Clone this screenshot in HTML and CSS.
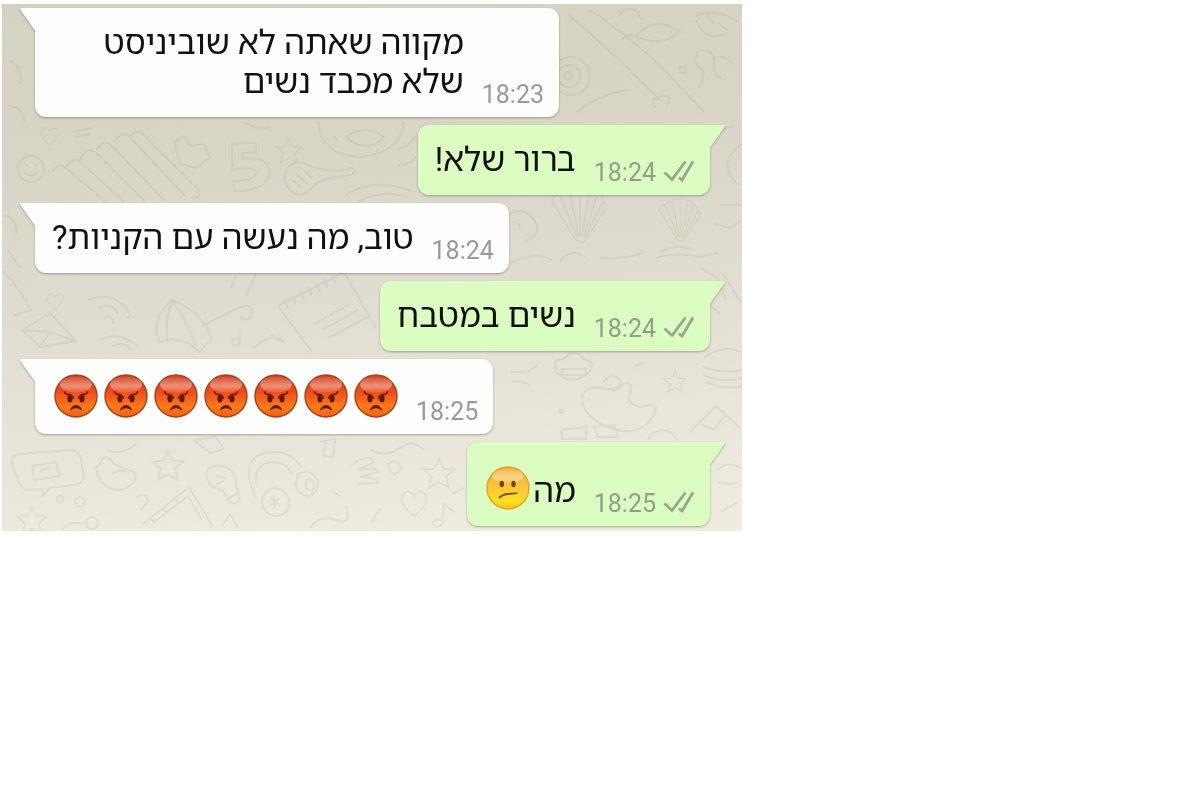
FILE: index.html
```html
<!DOCTYPE html>
<html lang="he">
<head>
    <meta charset="UTF-8">
    <title>Chat</title>
    <link rel="stylesheet" href="styles.css">
</head>
<body>
    <!-- shared icons -->
    <svg class="sprite" aria-hidden="true">
        <defs>
            <linearGradient id="red-face" x1="0" y1="0" x2="0" y2="1">
                <stop offset="0" stop-color="#c93a1c"/>
                <stop offset="0.4" stop-color="#ee4c1c"/>
                <stop offset="0.75" stop-color="#fb7a18"/>
                <stop offset="1" stop-color="#ee6210"/>
            </linearGradient>
            <linearGradient id="yellow-face" x1="0" y1="0" x2="0" y2="1">
                <stop offset="0" stop-color="#f4ab3a"/>
                <stop offset="0.45" stop-color="#fac23a"/>
                <stop offset="0.8" stop-color="#ffdf1f"/>
                <stop offset="1" stop-color="#fbc41c"/>
            </linearGradient>
            <linearGradient id="shine" x1="0" y1="0" x2="0" y2="1">
                <stop offset="0" stop-color="#fff" stop-opacity="0.1"/>
                <stop offset="0.6" stop-color="#fff" stop-opacity="0.4"/>
                <stop offset="1" stop-color="#fff" stop-opacity="0.1"/>
            </linearGradient>
            <symbol id="angry" viewBox="0 0 44 44">
                <circle cx="22" cy="22" r="21" fill="url(#red-face)" stroke="#a8401a" stroke-width="1.4"/>
                <ellipse cx="22" cy="10.5" rx="16" ry="8" fill="url(#shine)"/>
                <ellipse cx="16" cy="24.5" rx="2.6" ry="4" fill="#5c1c08"/>
                <ellipse cx="28" cy="24.5" rx="2.6" ry="4" fill="#5c1c08"/>
                <path d="M10.5 18q1 2.500 4 2.500t5 3.500M33.500 18q-1 2.500-4 2.500t-5 3.500" fill="none" stroke="#7a2009" stroke-width="1.900" stroke-linecap="round"/>
                <path d="M16.500 36q1.500-4.500 5.500-4.500t5.500 4.500q-2.500-2.300-5.500-2.300t-5.500 2.300z" fill="#5c1c08" stroke="#5c1c08" stroke-linejoin="round"/>
            </symbol>
            <symbol id="confused" viewBox="0 0 44 44">
                <circle cx="22" cy="22" r="21" fill="url(#yellow-face)" stroke="#dfa02c" stroke-width="1.4"/>
                <ellipse cx="22" cy="10" rx="15.500" ry="7.500" fill="url(#shine)"/>
                <ellipse cx="15.800" cy="18" rx="2.200" ry="3.200" fill="#6b4a10"/>
                <ellipse cx="27.500" cy="18" rx="2.200" ry="3.200" fill="#6b4a10"/>
                <path d="M13.500 31.500q4-3.500 8.500-3.500t8.500-.8" fill="none" stroke="#7a5210" stroke-width="1.800" stroke-linecap="round"/>
            </symbol>
            <symbol id="ticks" viewBox="0 0 32 24">
                <path d="M1.500 13.500l7.500 7L22.500 2.500M16 18.500l3 2.500L30 2.500" fill="none" stroke="#96a68c" stroke-width="2.800"/>
            </symbol>
            <symbol id="star" viewBox="0 0 40 40">
                <path d="M20 3l5 11 12 1-9 8 3 12-11-6-11 6 3-12-9-8 12-1z"/>
            </symbol>
            <symbol id="heart" viewBox="0 0 40 40">
                <path d="M20 35C9 27 2 18 7 10c5-7 12-2 13 3 2-6 10-9 14-2 3 8-5 17-14 24z"/>
            </symbol>
            <symbol id="shell" viewBox="0 0 80 80">
                <path d="M32 72L4 26q2-10 9-7 2-10 10-6 4-9 12-4 7-6 12 2 9-2 10 6 9 0 9 9 6 6 0 12L44 74q-7 4-12-2zM34 69L14 20M36 69L25 14M38 69l-1-58M40 69l9-56M42 69l16-49M43 70l22-42"/>
            </symbol>
        </defs>
    </svg>

    <main class="chat">
        <svg class="wallpaper" viewBox="2 4 740 527" preserveAspectRatio="xMidYMid slice" aria-hidden="true">
            <!-- left column -->
            <use href="#heart" x="38" y="124" width="24" height="24"/>
            <circle cx="31" cy="169" r="13"/>
            <path d="M26 165h2M35 165h2M24 172q7 7 13 0"/>
            <path d="M10 60q14 8 10 24M8 105q18 4 16 18M6 215q12 6 10 20M8 250l12 18"/>
            <path d="M52 172q6-10 14-4l40 34M66 168q6-12 14-6l44 40M80 160q6-14 15-8l50 50M96 150q8-12 16-4l52 54M114 142q8-14 17-4l54 58M131 136q8-10 16 2l50 50q6 12-6 10"/>
            <path d="M174 142l10-6 6 10 14-2 6 14-14 10-16-4zM72 132l20-4M74 137l16-3M245 123q14 8 26 4"/>
            <path d="M232 144l24-1v9l-14 1v6q24-4 28 12-2 20-36 20v-10q20 0 22-8-2-8-24-3z"/>
            <use href="#star" x="274" y="136" width="30" height="30"/>
            <path d="M288 168q-8 12 2 22t22-2q6-10 34-12 14-3 6-8-20 6-42-2-14-8-22 2zM296 174l12 10M292 180l10 8M304 170l8 8"/>
            <path d="M318 121q2 34 42 36 42-4 44-36M346 137q20-14 38 0-18 18-38 0zM334 136l4 5M376 152l3-4M396 150q12-2 20-14M398 166q14-2 18-10M345 195q30-18 66-4M358 202q26-14 50-4"/>
            <!-- upper right -->
            <circle cx="571" cy="76" r="19"/><circle cx="569" cy="76" r="11"/><circle cx="568" cy="76" r="4"/>
            <path d="M568 14q44 38 92 86M590 10q50 34 80 66l34 36M576 112q24-18 52-22M655 108q-6-10 6-12t6 10"/>
            <path d="M636 36q20-22 44-4-20 16-44 4-12-2-14 4M618 18q4-12 18-8l6 10"/>
            <path d="M694 16q24-8 44 6M696 20q8 22 30 14M706 12l8 12M718 24l10 6M680 67h6v6h-6z"/>
            <path d="M700 50q16 0 14 14-2 12 8 14M698 52q-6 12 2 16t-2 20M714 58q12-4 18 6"/>
            <use href="#shell" x="544" y="180" width="76" height="66"/>
            <use href="#shell" x="654" y="194" width="56" height="50"/>
            <path d="M741 144q-26 20-2 42M722 130l12-5M510 214q14-8 24 6t-10 22M512 222q8 0 8 8M416 240q18-6 44 0M600 258q20 2 44-5M656 258q16-6 40-2 8 2 22-4M660 252q14-8 32-3M508 264q26-14 44-4M560 262q10-16 26-4"/>
            <path d="M720 205h22M714 224l16 4 12-8M722 272l20 32M700 268l18 10 8 22M710 305l10 9"/>
            <!-- middle band -->
            <path d="M22 330l28-17 26 28-36 6zM22 330l28 2 26 9M50 332l-10 15M3 270l16 20 12 20-18 6"/>
            <use href="#heart" x="44" y="290" width="22" height="22"/>
            <path d="M88 300q20-8 34 4t4 14M98 308q16-6 20 6M104 318q8-4 10 6M100 340q20-10 38 6M112 346q12-6 18 4"/>
            <path d="M172 300q-24 22-12 42 20-8 40 10 10-14 12-10-6-28-40-42zM172 300q-8 22-4 42M172 300q14 20 24 46M202 326l36-18q14-6 14 4-2 12-12 4"/>
            <path d="M236 338a4 4 0 1 0 .1 0zM240 340v-8M252 348l20-12 12 6M230 290l6-14M246 296l10-22"/>
            <path d="M278 306l66-34 32 56M278 306l34 46M284 300l4 8M292 296l4 8M300 291l4 8M308 287l4 8M316 283l4 8M324 279l4 8M332 275l4 8M314 324l36-20M322 330l36-20M328 338l42-22"/>
            <path d="M510 372q20 2 28-8M512 382q12-2 18 4M556 372q-4-14 8-13 10-12 20 0 14 4 4 14-16 14-32-1zM562 369h24v6h-24zM604 382q4-10 16-3 2 10-8 12M634 366l10-3"/>
            <use href="#star" x="662" y="369" width="26" height="26"/>
            <path d="M582 400q0-14 18-12 16 4 24-5 10-1 6 10t10 14q22-6 14 8-14 22-40 14-28-8-32-29zM560 410h3v3h-3zM562 430l24-3v12h-24zM594 427l20-2 4 12h-20z"/>
            <path d="M704 358q16-14 38-6M702 366q18 8 40 4M702 374q18 10 40 4M706 382q16 8 36 4M690 432l26-26 24 22M700 424l14 6 10-14M648 440q6-14 22-8l8 8"/>
            <!-- bottom band -->
            <path d="M12 464q-2-9 8-10l50-4q10 0 11 10l3 16q0 8-10 9l-24 3-7 8-1-7-12 1q-9 0-12-10zM32 466l24-4 4 14-26 4zM40 471l10-4"/>
            <path d="M96 468q4 22 24 22 20-6 14-18l-20-8q-10-14-14 0zM112 474q8-6 14-2M108 450q14 6 28-6M62 494l2 6"/>
            <use href="#star" x="148" y="448" width="40" height="36"/>
            <path d="M206 474q2-10 16-8 16 4 14 20l4 12q-2 8-10 4l-8-12q-14-2-16-16zM216 476l10 2M216 484l10-4M226 500l12-7"/>
            <path d="M250 482q-6-30 24-30 18 0 28 16M256 484q-2-22 18-22 12 0 18 12M250 482l6 16M298 474q12-6 18 4t-6 18q-14 0-14-12zM306 480q8-2 8 6t-8 2z"/>
            <path d="M266 492q8-8 18 0 10 10 2 20-10 8-20 0-8-10 0-20zM270 498l10 8M280 498l-10 8M274 495v14"/>
            <path d="M143 524l46-37 24 40M153 523l35-27 14 24M150 518l4 4M162 508l4 4M174 498l4 4M222 526l8-12 8 14M136 498q10-8 12 4l-8 8M194 440l22-3 8 12-14 4zM320 442l16-3M326 442l-3 14 10 1 2-18"/>
            <use href="#star" x="14" y="504" width="36" height="34"/>
            <circle cx="80" cy="502" r="5"/><circle cx="92" cy="523" r="6"/><circle cx="60" cy="499" r="3"/>
            <path d="M62 530q8-10 22-6M350 466q20-14 24-4l-16 8q20-4 20 2l-18 5q18 0 17 6l-20 1M330 490l10 6M310 528q10-14 26-8t10-14M370 450q18 8 30-2t24 2"/>
            <path d="M388 464l6-3q8 2 6 10-6 6-10 0z"/>
            <use href="#star" x="420" y="456" width="38" height="36"/>
            <use href="#heart" x="396" y="486" width="36" height="34"/>
            <path d="M441 520q-6-2-8 4 4 6 9 0l2-20 10 8M452 494l12-6M380 508l-8 14M716 470q14-10 24-2M718 482q12 4 20 0M720 512l18-10"/>
        </svg>

        <div class="bubble in">
            <p class="text" dir="rtl">מקווה שאתה לא שוביניסט שלא מכבד נשים</p>
            <time class="time">18:23</time>
        </div>

        <div class="bubble out">
            <p class="text" dir="rtl">ברור שלא!</p>
            <time class="time">18:24</time>
            <svg class="ticks" role="img" aria-label="נמסר"><use href="#ticks"/></svg>
        </div>

        <div class="bubble in">
            <p class="text" dir="rtl">טוב, מה נעשה עם הקניות?</p>
            <time class="time">18:24</time>
        </div>

        <div class="bubble out">
            <p class="text" dir="rtl">נשים במטבח</p>
            <time class="time">18:24</time>
            <svg class="ticks" role="img" aria-label="נמסר"><use href="#ticks"/></svg>
        </div>

        <div class="bubble in">
            <div class="emoji-row">
                <svg class="emoji"><use href="#angry"/></svg>
                <svg class="emoji"><use href="#angry"/></svg>
                <svg class="emoji"><use href="#angry"/></svg>
                <svg class="emoji"><use href="#angry"/></svg>
                <svg class="emoji"><use href="#angry"/></svg>
                <svg class="emoji"><use href="#angry"/></svg>
                <svg class="emoji"><use href="#angry"/></svg>
            </div>
            <time class="time">18:25</time>
        </div>

        <div class="bubble out">
            <p class="text" dir="rtl">מה<svg class="emoji inline"><use href="#confused"/></svg></p>
            <time class="time">18:25</time>
            <svg class="ticks" role="img" aria-label="נמסר"><use href="#ticks"/></svg>
        </div>
    </main>
</body>
</html>
```
FILE: styles.css
```css
body {
    margin: 4px 2px;
    background: white;
    font-family: Roboto, "Noto Sans Hebrew", sans-serif;
}

.sprite {
    position: absolute;
    width: 0;
    height: 0;
}

.chat {
    position: relative;
    box-sizing: border-box;
    max-width: 740px;
    padding: 4px 32px 5px 33px;
    display: flex;
    flex-direction: column;
    gap: 8px;
    overflow: hidden;
    background: linear-gradient(175deg, #d4d2c1 0%, #d9d5c7 30%, #e2ded2 60%, #efebdf 95%);
}

.wallpaper {
    position: absolute;
    inset: 0;
    width: 100%;
    height: 100%;
    fill: none;
    stroke: #8f8c78;
    stroke-width: 2;
    opacity: 0.14;
}

.bubble {
    position: relative;
    box-sizing: border-box;
    max-width: 524px;
    padding: 15px 15px 16px 17px;
    display: flex;
    align-items: flex-end;
    border-radius: 11px;
    filter: drop-shadow(0 1px 1px rgba(0,0,0,0.3));
}

.in {
    align-self: flex-start;
    background: #fefefe;
    border-top-left-radius: 0;
}

.out {
    align-self: flex-end;
    background: #dcfdc2;
    border-top-right-radius: 0;
}

/* bubble tails */
.in::before,
.out::before {
    content: "";
    position: absolute;
    top: 0;
    width: 16px;
    height: 24px;
    background: inherit;
}

.in::before {
    right: calc(100% - 1px);
    clip-path: polygon(0 0, 100% 0, 100% 100%, 1px 3px);
}

.out::before {
    left: calc(100% - 1px);
    clip-path: polygon(0 0, 100% 0, 15px 3px, 0 100%);
}

.text {
    margin: 0;
    font-size: 33px;
    line-height: 39px;
    color: #111;
}

.time {
    margin-left: 18px;
    font-size: 25px;
    line-height: 30px;
    margin-bottom: -9px;
    color: #999;
}

.out .time {
    color: #8fa085;
}

.ticks {
    flex: none;
    width: 32px;
    height: 24px;
    margin-left: 7px;
    margin-bottom: -4px;
}

.emoji-row {
    display: flex;
    gap: 6px;
    padding-left: 2px;
}

.emoji {
    flex: none;
    width: 44px;
    height: 44px;
}

.inline {
    margin: 9px 3px 0 2px;
    vertical-align: -8px;
}
```
